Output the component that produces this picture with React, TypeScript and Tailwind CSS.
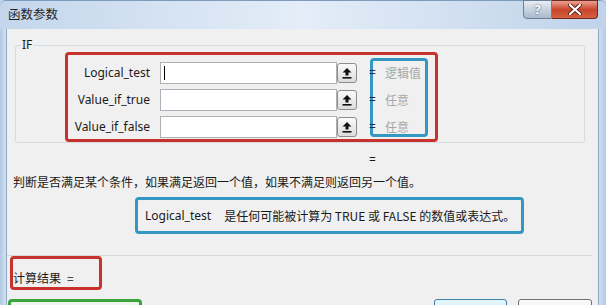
import React from 'react';

const rows = [
  { label: 'Logical_test', value: '逻辑值', caret: true },
  { label: 'Value_if_true', value: '任意', caret: false },
  { label: 'Value_if_false', value: '任意', caret: false },
];

function CollapseIcon() {
  return (
    <svg width="10" height="12" viewBox="0 0 10 12">
      <path d="M5 1 L9.5 5.5 L6.5 5.5 L6.5 8.5 L3.5 8.5 L3.5 5.5 L0.5 5.5 Z" fill="#111" />
      <rect x="0.5" y="10" width="9" height="1.6" fill="#111" />
    </svg>
  );
}

function TitleBar() {
  return (
    <div className="h-[29px] shrink-0 flex items-start justify-between bg-gradient-to-r from-[#c3d6ec] via-[#e4edf8] to-[#bfd3ea] rounded-t-[6px] border-t border-[#7d9bbd]">
      <span className="ml-[8px] mt-[6px] text-[12.5px] leading-[16px] text-[#1e1e1e]">函数参数</span>
      <div className="flex mr-[8px] -mt-px">
        <div className="w-[29px] h-[19px] rounded-bl-[4px] border border-[#6d7f95] bg-gradient-to-b from-[#e6edf5] to-[#a9b9cc] flex items-center justify-center">
          <span className="text-[13px] leading-none font-bold text-white [text-shadow:0_0_2px_#2f3f55]">?</span>
        </div>
        <div className="w-[46px] h-[19px] rounded-br-[4px] border border-l-0 border-[#6e2a20] bg-gradient-to-b from-[#e9a08f] via-[#c9452d] to-[#d4603f] flex items-center justify-center">
          <svg width="14" height="11" viewBox="0 0 14 11">
            <path d="M2 1 L12 10 M12 1 L2 10" stroke="#5a1f16" strokeWidth="4" strokeLinecap="round" />
            <path d="M2 1 L12 10 M12 1 L2 10" stroke="#fff" strokeWidth="2.2" strokeLinecap="round" />
          </svg>
        </div>
      </div>
    </div>
  );
}

export default function App() {
  return (
    <div className="w-[606px] h-[305px] overflow-hidden bg-[#c4d7ec] font-['Noto_Sans','Noto_Sans_CJK_SC',sans-serif] text-[#1a1a1a] flex flex-col">
      <TitleBar />
      <div className="flex flex-1 min-h-0">
        <div className="w-[7px] shrink-0 bg-gradient-to-r from-[#b2c9e3] to-[#d3e2f2] border-r border-[#8ea8c4]" />
        <div className="w-[591px] shrink-0 bg-[#f0f0f0] pt-[16px]">
          {/* group box */}
          <div className="relative ml-[8px] w-[570px] h-[98px] border border-[#d5dbe0] rounded-[3px]">
            <span className="absolute left-[5px] -top-[9px] px-[1px] bg-[#f0f0f0] text-[12px] leading-[16px]">IF</span>
            <div className="ml-[49px] mt-[6px] w-[373px] h-[90px] border-[3px] border-[#c8322c] rounded-[4px] flex items-start">
              <div className="pt-[7px] flex flex-col gap-[5px]">
                {rows.map((r) => (
                  <div key={r.label} className="flex items-center h-[22px]">
                    <span className="w-[82px] text-right text-[12px] leading-[16px] mr-[10px] whitespace-nowrap">{r.label}</span>
                    <div className="w-[177px] h-[22px] bg-white border border-[#abb0b7] flex items-center">
                      {r.caret && <div className="ml-[3px] w-px h-[14px] bg-black" />}
                    </div>
                    <div className="w-[20px] h-[20px] rounded-[3px] border border-[#8c8c8c] bg-gradient-to-b from-[#fafafa] to-[#dcdcdc] flex items-center justify-center">
                      <CollapseIcon />
                    </div>
                  </div>
                ))}
              </div>
              <div className="ml-[13px] mt-[3px] w-[58px] h-[79px] border-[3px] border-[#3497c2] rounded-[4px]">
                <div className="-mt-[2px] flex flex-col">
                  {rows.map((r) => (
                    <div key={r.label} className="h-[27px] flex items-center">
                      <span className="-ml-[4px] w-[8px] text-[12px] leading-none text-[#1d2a4a]">=</span>
                      <span className="ml-[8px] text-[12px] leading-none text-[#a8a8a8] font-['Noto_Sans_CJK_SC',sans-serif]">{r.value}</span>
                    </div>
                  ))}
                </div>
              </div>
            </div>
          </div>

          <div className="mt-[9px] ml-[362px] h-[16px] text-[12px] leading-[16px]">=</div>
          <div className="mt-[6px] ml-[6px] h-[16px] text-[12px] leading-[16px] font-['Noto_Sans_CJK_SC',sans-serif] whitespace-nowrap">
            判断是否满足某个条件，如果满足返回一个值，如果不满足则返回另一个值。
          </div>

          <div className="ml-[128px] mt-[7px] w-[389px] h-[37px] border-[3px] border-[#3497c2] rounded-[4px] flex items-center pl-[7px] text-[12px] whitespace-nowrap">
            <span>Logical_test</span>
            <span className="ml-[13px] font-['Noto_Sans_CJK_SC',sans-serif]">是任何可能被计算为 TRUE 或 FALSE 的数值或表达式。</span>
          </div>

          <div className="mt-[21px] mr-[6px] h-[2px] border-t border-[#d9d9d9] border-b-white" />

          <div className="ml-[3px] -mt-[1px] w-[92px] h-[34px] border-[3px] border-[#c8322c] rounded-[4px] pt-[11px] text-[12px] leading-[16px] whitespace-nowrap font-['Noto_Sans_CJK_SC',sans-serif]">
            计算结果<span className="ml-[6px]">=</span>
          </div>

          <div className="mt-[9px] flex items-start">
            <div className="ml-[1px] w-[134px] h-[30px] border-[3px] border-[#3ba33b] rounded-[4px] bg-[#eef7ee]" />
            <div className="ml-[292px] w-[73px] h-[24px] rounded-[3px] border border-[#3d7fa8] bg-gradient-to-b from-[#e6f6fd] to-[#c9e9f8]" />
            <div className="ml-[11px] w-[74px] h-[24px] rounded-[3px] border border-[#707070] bg-gradient-to-b from-[#fafafa] to-[#e6e6e6]" />
          </div>
        </div>
        <div className="flex-1 bg-gradient-to-r from-[#d0e0f1] to-[#b5cbe4] border-l border-[#8ea8c4]" />
      </div>
    </div>
  );
}
